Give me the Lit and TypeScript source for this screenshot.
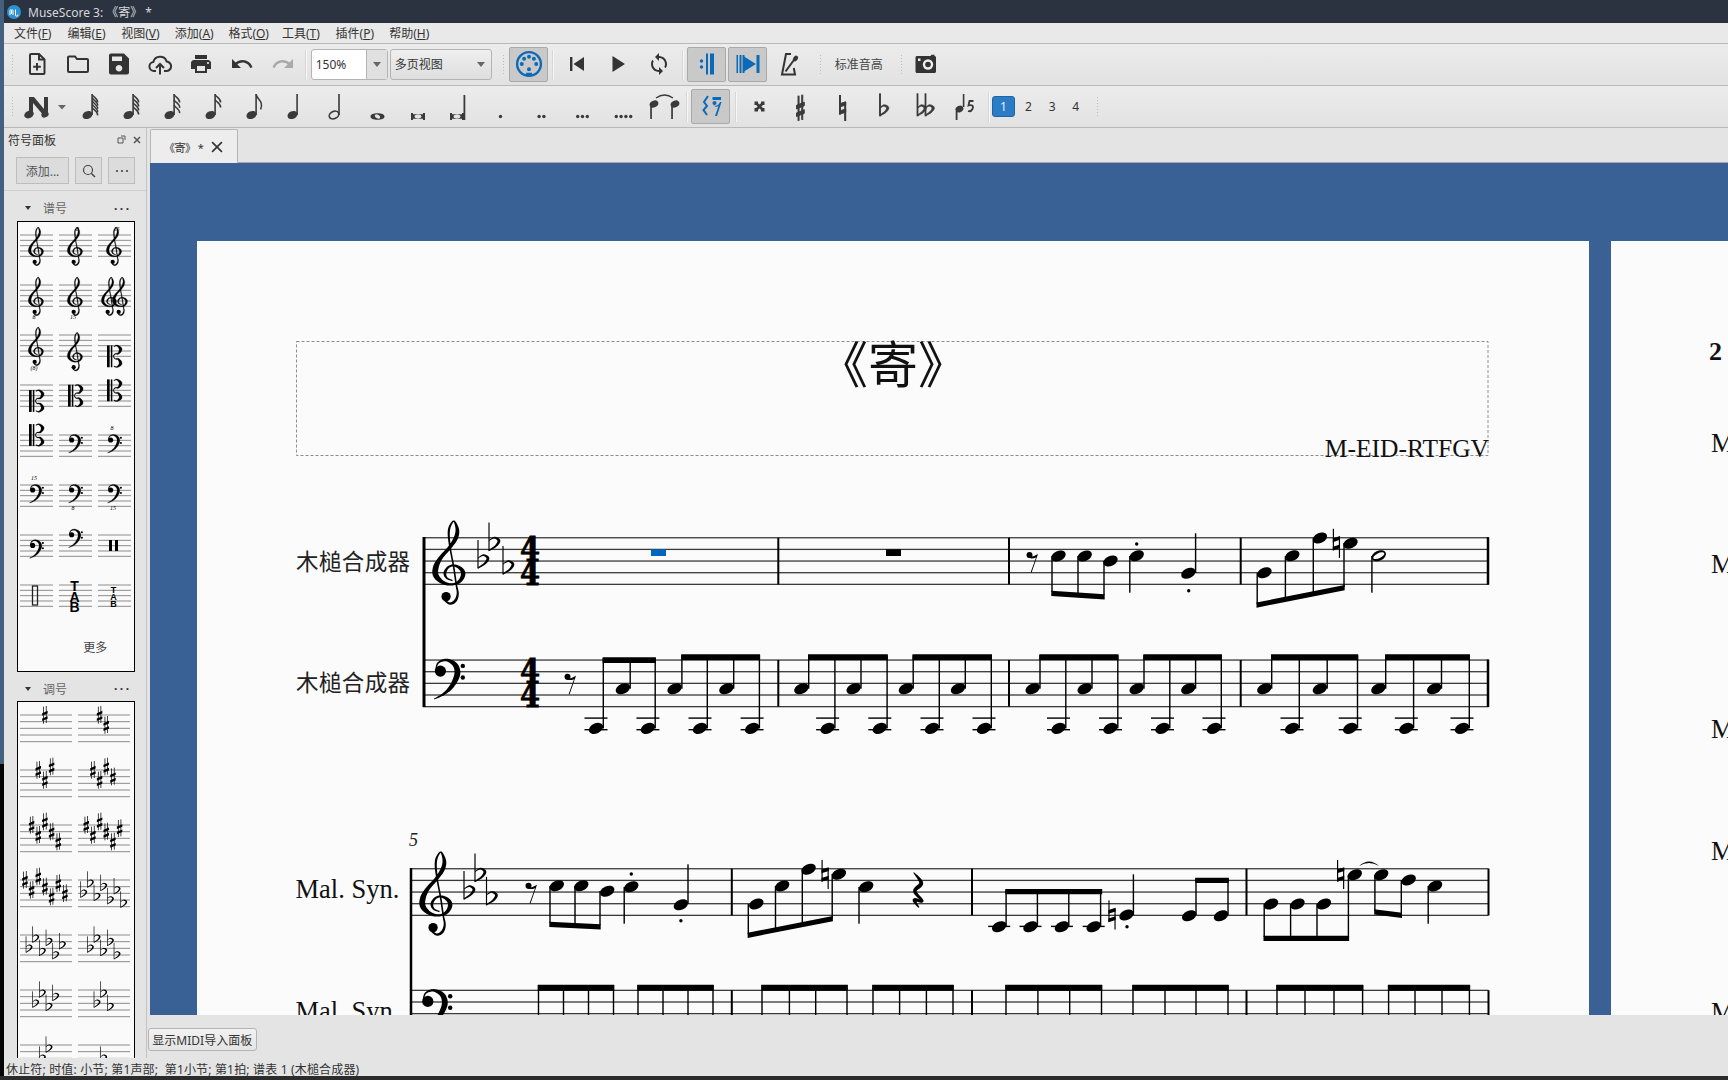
import { LitElement, html, css, svg } from 'lit'
import { customElement } from 'lit/decorators.js'

// variable width stroke: [x, y, width] control points, catmull-rom sampled, returned as a filled outline
function brush(pts: number[][]): string {
  const s: number[][] = []
  const cr = (a: number, b: number, c: number, d: number, t: number) =>
    0.5 * (2 * b + (c - a) * t + (2 * a - 5 * b + 4 * c - d) * t * t + (3 * b - a - 3 * c + d) * t * t * t)
  for (let i = 0; i < pts.length - 1; i++) {
    const p0 = pts[Math.max(i - 1, 0)], p1 = pts[i], p2 = pts[i + 1], p3 = pts[Math.min(i + 2, pts.length - 1)]
    for (let k = 0; k < 8; k++) {
      const t = k / 8
      s.push([cr(p0[0], p1[0], p2[0], p3[0], t), cr(p0[1], p1[1], p2[1], p3[1], t), cr(p0[2], p1[2], p2[2], p3[2], t)])
    }
  }
  s.push(pts[pts.length - 1])
  const l: string[] = [], r: string[] = []
  s.forEach((p, i) => {
    const a = s[Math.max(i - 1, 0)], b = s[Math.min(i + 1, s.length - 1)]
    const dx = b[0] - a[0], dy = b[1] - a[1], n = Math.hypot(dx, dy) || 1
    const ox = (-dy / n) * p[2] / 2, oy = (dx / n) * p[2] / 2
    l.push(`${(p[0] + ox).toFixed(3)} ${(p[1] + oy).toFixed(3)}`)
    r.unshift(`${(p[0] - ox).toFixed(3)} ${(p[1] - oy).toFixed(3)}`)
  })
  return `M${l.join('L')}L${r.join('L')}Z`
}

const TREBLE = brush([
  [0.3, 0.68, 0.1], [-0.2, 0.45, 0.16], [-0.35, 0, 0.24], [-0.05, -0.48, 0.18], [0.45, -0.62, 0.18],
  [1.0, -0.35, 0.3], [1.22, 0.1, 0.38], [0.95, 0.7, 0.3], [0.3, 1.0, 0.18], [-0.5, 0.85, 0.3],
  [-1.12, 0.25, 0.48], [-1.12, -0.5, 0.48], [-0.7, -1.3, 0.34], [0, -2.1, 0.3], [0.55, -2.9, 0.36],
  [0.72, -3.6, 0.32], [0.55, -4.25, 0.18], [0.35, -4.4, 0.12], [0.05, -3.9, 0.18], [-0.02, -3.2, 0.18],
  [0.12, -2, 0.14], [0.4, -0.5, 0.14], [0.62, 1, 0.14], [0.75, 1.8, 0.18], [0.55, 2.4, 0.24],
  [0.1, 2.65, 0.2], [-0.35, 2.4, 0.14],
])
const BASS = brush([
  [0.1, -0.1, 0.1], [0.3, -0.75, 0.14], [1.0, -1.0, 0.22], [1.75, -0.6, 0.42], [1.95, 0.2, 0.5],
  [1.5, 1.2, 0.38], [0.8, 1.9, 0.22], [-0.05, 2.35, 0.06],
])
const FLAT_BOWL = brush([[0, -0.25, 0.06], [0.45, -0.5, 0.14], [0.85, -0.25, 0.24], [0.6, 0.2, 0.18], [0, 0.6, 0.1]])
const C_UP = brush([[1.3, -1.85, 0.12], [1.9, -2, 0.22], [2.55, -1.35, 0.55], [2.15, -0.55, 0.3], [1.5, -0.45, 0.14], [1.2, -0.02, 0.12]])
const C_DOWN = brush([[1.3, 1.85, 0.12], [1.9, 2, 0.22], [2.55, 1.35, 0.55], [2.15, 0.55, 0.3], [1.5, 0.45, 0.14], [1.2, 0.02, 0.12]])
const QUARTER_REST = brush([[0.1, -1.5, 0.08], [0.75, -0.6, 0.34], [0.2, 0.1, 0.3], [0.85, 0.95, 0.22], [0.15, 0.85, 0.3], [0.55, 1.5, 0.1]])

const treble = (x: number, y: number, s: number) => svg`<g transform="translate(${x} ${y}) scale(${s})">
  <path d=${TREBLE}></path><circle cx="-0.25" cy="2.05" r="0.4"></circle></g>`
const bass = (x: number, y: number, s: number) => svg`<g transform="translate(${x} ${y}) scale(${s})">
  <path d=${BASS}></path><circle cx="0.5" cy="-0.05" r="0.48"></circle>
  <circle cx="2.42" cy="-0.5" r="0.19"></circle><circle cx="2.42" cy="0.5" r="0.19"></circle></g>`
const altoClef = (x: number, y: number, s: number) => svg`<g transform="translate(${x} ${y}) scale(${s})">
  <rect x="0" y="-2.05" width="0.5" height="4.1"></rect><rect x="0.72" y="-2.05" width="0.28" height="4.1"></rect>
  <path d=${C_UP}></path><path d=${C_DOWN}></path></g>`
const flat = (x: number, y: number, s: number) => svg`<g transform="translate(${x} ${y}) scale(${s})">
  <rect x="-0.05" y="-1.8" width="0.1" height="2.45"></rect><path d=${FLAT_BOWL}></path></g>`
const sharp = (x: number, y: number, s: number) => svg`<g transform="translate(${x} ${y}) scale(${s})">
  <rect x="0.16" y="-1.25" width="0.11" height="2.55"></rect><rect x="0.55" y="-1.35" width="0.11" height="2.55"></rect>
  <polygon points="0,-0.28 0.82,-0.62 0.82,-0.24 0,0.1"></polygon><polygon points="0,0.52 0.82,0.18 0.82,0.56 0,0.9"></polygon></g>`
const natural = (x: number, y: number, s: number) => svg`<g transform="translate(${x} ${y}) scale(${s})">
  <rect x="0" y="-1.25" width="0.1" height="1.85"></rect><rect x="0.52" y="-0.55" width="0.1" height="1.8"></rect>
  <polygon points="0,-0.42 0.62,-0.62 0.62,-0.3 0,-0.1"></polygon><polygon points="0,0.3 0.62,0.1 0.62,0.42 0,0.62"></polygon></g>`

const head = (x: number, y: number) =>
  svg`<ellipse cx=${x} cy=${y} rx="7.6" ry="5" transform="rotate(-25 ${x} ${y})"></ellipse>`
const stem = (x: number, y1: number, y2: number) =>
  svg`<rect x=${x - 0.7} y=${Math.min(y1, y2)} width="1.4" height=${Math.abs(y2 - y1)}></rect>`
const beam = (x1: number, y1: number, x2: number, y2: number, h = 5.2) =>
  svg`<polygon points="${x1 - 0.7},${y1} ${x2 + 0.7},${y2} ${x2 + 0.7},${y2 + h} ${x1 - 0.7},${y1 + h}"></polygon>`
const dot = (x: number, y: number) => svg`<circle cx=${x} cy=${y} r="1.7"></circle>`
const bar = (x: number, y1: number, y2: number, w = 2) =>
  svg`<rect x=${x - w / 2} y=${y1} width=${w} height=${y2 - y1}></rect>`
const staffLines = (x1: number, x2: number, top: number) =>
  [0, 1, 2, 3, 4].map(i => svg`<rect class="line" x=${x1} y=${top + i * 11.65 - 0.6} width=${x2 - x1} height="1.3"></rect>`)
const rest8 = (x: number, y: number) => svg`<circle cx=${x + 3.5} cy=${y} r="3"></circle>
  <path d="M${x + 1} ${y + 2} Q${x + 6} ${y + 3} ${x + 12} ${y - 1} L${x + 5.6} ${y + 17.5} L${x + 4.6} ${y + 17.5} L${x + 10} ${y + 2.5} Q${x + 5} ${y + 4.5} ${x + 1} ${y + 2}Z"></path>`
const timeSig = (x: number, top: number) => svg`
  <text class="timesig" x=${x} y=${top + 23.4} textLength="20" lengthAdjust="spacingAndGlyphs">4</text>
  <text class="timesig" x=${x} y=${top + 46.8} textLength="20" lengthAdjust="spacingAndGlyphs">4</text>`

// lower staff: alternating eighths (high note, low note on two ledger lines)
const pedal = (x: number, st: number, low: boolean, beamTop: number) => {
  const y = low ? 728.4 : 688.7
  return svg`${head(x, y)}${stem(st, beamTop + 1, y)}
    ${low ? svg`<rect x=${x - 11.5} y="717.4" width="23" height="1.4"></rect><rect x=${x - 11.5} y="729" width="23" height="1.4"></rect>` : ''}`
}

const LOWER: [number, boolean][][] = [
  [[596, true], [622.9, false], [647.9, true]],
  [[674.6, false], [700, true], [726.4, false], [752.1, true]],
  [[801.4, false], [827.6, true], [853.7, false], [879.8, true]],
  [[905.9, false], [932, true], [958, false], [984, true]],
  [[1032.7, false], [1058.5, true], [1084.7, false], [1110.5, true]],
  [[1136.7, false], [1162.5, true], [1188.3, false], [1214, true]],
  [[1264.4, false], [1292, true], [1319.9, false], [1350.2, true]],
  [[1378.4, false], [1406.3, true], [1434.2, false], [1462, true]],
]

const SYS2_LOWER = [
  [538.5, 563.5, 588.5, 613.5], [638, 663, 688, 713], [762, 789.4, 815.7, 847], [873, 899.6, 926.4, 953],
  [1006, 1037.9, 1069.7, 1101.5], [1133, 1165, 1196, 1228], [1277, 1305, 1334, 1362.6], [1388.6, 1415, 1442, 1469.4],
]

// palette contents
const cellLines = (x1: number, x2: number, top: number, gap: number) =>
  [0, 1, 2, 3, 4].map(i => svg`<rect class="pline" x=${x1} y=${top + i * gap - 0.5} width=${x2 - x1} height="1"></rect>`)

const mark = (x: number, y: number, t: string) => svg`<text class="mark" x=${x} y=${y}>${t}</text>`
const G = (line: number, extra: unknown = '') => svg`${treble(18, 13 + line * 5.33, 5.33)}${extra}`
const F = (line: number, extra: unknown = '') => svg`${bass(12, 13 + line * 5.33, 5.33)}${extra}`
const C = (line: number) => altoClef(11, 13 + line * 5.33, 5.33)
const CLEFS = [
  G(3), G(3, mark(20.5, 9, '8')), G(3, mark(20.5, 9, '15')),
  G(3, mark(16, 47, '8')), G(3, mark(16, 47, '15')),
  svg`${treble(13, 29, 5.33)}${treble(24, 29, 5.33)}`,
  G(3, mark(16, 48, '(8)')), G(4), C(4),
  C(3), C(2), C(1),
  C(0), F(1), F(1, mark(16, 8, '8')),
  F(1, mark(16, 8, '15')), F(1, mark(16, 38, '8')), F(1, mark(17, 38, '15')),
  F(2), F(0),
  svg`<rect x="13" y="18" width="3" height="11"></rect><rect x="19" y="18" width="3" height="11"></rect>`,
  svg`<rect class="hollow" x="14.5" y="14" width="5" height="19"></rect>`,
  svg`<text class="tab big" x="17.5" y="19">T</text><text class="tab big" x="17.5" y="29.5">A</text><text class="tab big" x="17.5" y="40">B</text>`,
  svg`<text class="tab" x="17.5" y="20.5">T</text><text class="tab" x="17.5" y="27.5">A</text><text class="tab" x="17.5" y="34.5">B</text>`,
]

const SHARP_POS = [0, 1.5, -0.5, 1, 2.5, 0.5, 2]
const FLAT_POS = [2, 0.5, 2.5, 1, 3, 1.5, 3.5]
const keySig = (n: number, isFlat: boolean) =>
  Array.from({ length: n }, (_, i) => {
    const x = 27 - 3.33 * n + 6.67 * i
    return isFlat ? flat(x + 1, 13 + FLAT_POS[i] * 6.67, 6.67) : sharp(x + 0.5, 13 + SHARP_POS[i] * 6.67, 6.67)
  })
const KEYS: [number, boolean][] = [[1, false], [2, false], [3, false], [4, false], [5, false], [6, false], [7, false], [7, true], [6, true], [5, true], [4, true], [3, true], [2, true], [1, true]]

// toolbar glyphs, drawn in a 41x43 box
const noteIcon = (flags: number, headX = 17.5) => {
  const st = headX + 4.6
  const step = flags > 2 ? 16 / flags : 5
  return html`<svg class="glyph" viewBox="0 0 41 43"><ellipse cx=${headX} cy="30" rx="5.2" ry="3.8" transform="rotate(-25 ${headX} 30)"></ellipse>
    <rect x=${st - 0.8} y="9" width="1.6" height="21"></rect>
    ${Array.from({ length: flags }, (_, i) => {
      const y = 9.5 + i * step
      return flags === 1
        ? svg`<path class="flag" d="M${st} ${y} C${st + 1} ${y + 5} ${st + 8} ${y + 7} ${st + 4.5} ${y + 15}"></path>`
        : svg`<path class="flag" d="M${st} ${y} C${st + 1.5} ${y + 3} ${st + 6} ${y + 4} ${st + 5.5} ${y + 8}"></path>`
    })}</svg>`
}
const dotsIcon = (n: number) => html`<svg class="glyph" viewBox="0 0 41 43">
  ${Array.from({ length: n }, (_, i) => svg`<circle cx=${20.5 - (n - 1) * 2.4 + i * 4.8} cy="31.5" r="1.7"></circle>`)}</svg>`
const plain = (body: unknown) => html`<svg class="glyph" viewBox="0 0 41 43">${body}</svg>`
const fat = (body: unknown) => html`<svg class="glyph fat" viewBox="0 0 41 43">${body}</svg>`
const icon24 = (body: unknown, cls = 'i24') => html`<svg class=${cls} viewBox="0 0 24 24">${body}</svg>`

const UNDO = 'M12.5 8c-2.65 0-5.05.99-6.9 2.6L2 7v9h9l-3.62-3.62c1.39-1.16 3.16-1.88 5.12-1.88 3.54 0 6.55 2.31 7.6 5.5l2.37-.78C21.08 11.03 17.15 8 12.5 8z'

const TOOLS1 = [
  icon24(svg`<path class="ln" d="M6 2h8l5.5 5.5V21a1 1 0 0 1-1 1H6a1 1 0 0 1-1-1V3a1 1 0 0 1 1-1z"></path><path class="ln" d="M14 2v5.5h5.5M12 11v7.5M8.2 14.7h7.6"></path>`),
  icon24(svg`<path class="ln" d="M2 5.5a1 1 0 0 1 1-1h6l2 2.5h10a1 1 0 0 1 1 1V19a1 1 0 0 1-1 1H3a1 1 0 0 1-1-1z"></path>`),
  icon24(svg`<path d="M17 1.5H4C2.9 1.5 2 2.4 2 3.5v17c0 1.1.9 2 2 2h16c1.1 0 2-.9 2-2v-14l-5-5zm-5 18c-1.9 0-3.3-1.4-3.3-3.3s1.4-3.3 3.3-3.3 3.3 1.4 3.3 3.3-1.4 3.3-3.3 3.3zm3-10.5H5V4.500h10V9z"></path>`),
  icon24(svg`<path class="ln" d="M8 19H6a4.500 4.500 0 0 1-.7-8.950A7 7 0 0 1 18.700 9.600 4.700 4.700 0 0 1 18 19h-2"></path><path class="ln" d="M12 22.500V12.500M8 16l4-4 4 4"></path>`),
  icon24(svg`<path d="M19 8H5c-1.660 0-3 1.340-3 3v6h4v4h12v-4h4v-6c0-1.660-1.340-3-3-3zm-3 11H8v-5h8v5zm3-7c-.55 0-1-.45-1-1s.45-1 1-1 1 .45 1 1-.45 1-1 1zm-1-9H6v4h12V3z"></path>`),
  icon24(svg`<path d=${UNDO}></path>`),
  icon24(svg`<path class="dim" transform="translate(24 0) scale(-1 1)" d=${UNDO}></path>`),
]

const MIDI = icon24(svg`<circle class="blue-ln" cx="12" cy="12" r="10.200"></circle><path class="blue" d="M9.500 19.500h5v2.500h-5z"></path>
  <circle class="blue" cx="5.800" cy="12" r="1.700"></circle><circle class="blue" cx="7.800" cy="7.500" r="1.700"></circle><circle class="blue" cx="12" cy="5.700" r="1.700"></circle>
  <circle class="blue" cx="16.200" cy="7.500" r="1.700"></circle><circle class="blue" cx="18.200" cy="12" r="1.700"></circle><circle class="blue" cx="12" cy="16.500" r="1.700"></circle>`, 'i28')

const ACCIDENTALS = [
  plain(svg`<path class="dbl" d="M17.500 18.500l6 6M23.500 18.500l-6 6"></path><rect x="15.500" y="16.500" width="3.500" height="3.500"></rect><rect x="22" y="16.500" width="3.500" height="3.500"></rect><rect x="15.500" y="23" width="3.500" height="3.500"></rect><rect x="22" y="23" width="3.500" height="3.500"></rect>`),
  fat(sharp(16.500, 23, 9.5)),
  fat(natural(18.500, 23, 10)),
  fat(flat(18, 25, 9)),
  fat(svg`${flat(14.500, 25, 9)}${flat(22.500, 25, 9)}`),
  // voice flip: note with stems either way, hook on the right
  plain(svg`<ellipse cx="15.500" cy="24" rx="4" ry="3.200" transform="rotate(-25 15.500 24)"></ellipse><rect x="11.700" y="24" width="1.800" height="11"></rect><rect x="18.800" y="9" width="1.600" height="13"></rect>
    <path class="flag2" d="M29.500 16h-4l-1 4.500c3-1 5.500 0 4 3.500-1 2-3 2.500-4.500 2"></path>`),
]

@customElement('app-root')
export class AppRoot extends LitElement {
  static styles = css`
    :host {
      display: flex;
      flex-direction: column;
      width: 1728px;
      height: 1080px;
      overflow: hidden;
      font-family: 'Noto Sans', 'Noto Sans CJK SC', sans-serif;
      font-size: 12px;
      color: #333;
      background: #e4e4e4;
    }
    .frame { flex: 1; display: flex; min-height: 0; }
    .desk { width: 4px; flex: none; background: linear-gradient(#44607f 0 71%, #060606 71%); }
    .window { flex: 1; display: flex; flex-direction: column; min-width: 0; }
    .bottom-edge { height: 4px; flex: none; background: #2c2c2c; }

    .titlebar { height: 23px; flex: none; display: flex; align-items: center; background: #2c3340; color: #d6d8dc; font-size: 12px; padding-left: 3px; gap: 7px; }
    .logo { width: 14px; height: 14px; }
    .menubar { height: 20px; flex: none; display: flex; align-items: center; padding-left: 2px; background: #e9e9e9; font-size: 12px; }
    .menubar span { padding: 0 8px; width: 37.600px; white-space: nowrap; }

    .toolbar { flex: none; display: flex; align-items: center; background: linear-gradient(#ececec, #e2e2e2); border-top: 1px solid #b9b9b9; }
    .row1 { height: 41px; }
    .row2 { height: 41px; border-bottom: 1px solid #b9b9b9; }
    .grip { width: 4px; height: 22px; flex: none; background-image: radial-gradient(#bdbdbd 0.7px, transparent 0.9px); background-size: 3px 3px; }
    .sep { width: 1px; height: 30px; flex: none; background: #f7f7f7; box-shadow: -1px 0 0 #d6d6d6; }
    .tb { width: 41px; height: 40px; flex: none; display: flex; align-items: center; justify-content: center; margin-top: -1px; }
    .on { width: 37px; height: 33px; margin: -1px 1px 0; border: 1px solid #a9a9a9; border-radius: 2px; background: #c9c9c9; }
    .voice { width: 22px; height: 21px; margin-right: 1.600px; flex: none; display: flex; align-items: center; justify-content: center; border-radius: 3px; font-size: 12px; }
    .voice.sel { width: 23px; margin-right: 2.500px; background: #2a7cc7; border: 1px solid #1e63a3; box-sizing: border-box; color: #e6f0fa; }
    .i24 { width: 24px; height: 24px; fill: #333; }
    .i28 { width: 28px; height: 28px; }
    .glyph { width: 41px; height: 43px; flex: none; fill: #3a3a3a; }
    .fat { stroke: #3a3a3a; stroke-width: 0.1; }
    .dbl { fill: none; stroke: #3a3a3a; stroke-width: 2.600; }
    .ln { fill: none; stroke: #333; stroke-width: 2; }
    .dim { fill: #a9a9a9; }
    .blue { fill: #0a6ab8; stroke: none; }
    .blue-ln { fill: none; stroke: #0a6ab8; stroke-width: 2; }
    .flag { fill: none; stroke: #3a3a3a; stroke-width: 1.500; }
    .flag2 { fill: none; stroke: #3a3a3a; stroke-width: 1.800; }
    .combo { height: 31px; flex: none; display: flex; align-items: center; box-sizing: border-box; border: 1px solid #b4b4b4; border-radius: 3px; font-size: 12px; margin-top: -1px; }
    .zoom { width: 77.500px; margin-left: 4px; background: #fff; padding-left: 4px; }
    .zoom .val { width: 50px; }
    .zoom .drop { width: 20px; height: 29px; background: #e0e0e0; border-left: 1px solid #b4b4b4; display: flex; align-items: center; justify-content: center; }
    .view { width: 102px; margin-left: 1.500px; background: linear-gradient(#efefef, #dedede); padding-left: 4px; justify-content: space-between; padding-right: 6px; }
    .arrow { width: 0; height: 0; border: 4px solid transparent; border-top: 5px solid #666; border-bottom: 0; }
    .concert { width: 48px; margin-left: 12px; font-size: 12px; white-space: nowrap; color: #444; margin-top: -1px; }
    .m1 { margin-left: 1.500px; }
    .m2 { margin-left: 2px; }
    .m3 { margin-left: 3.500px; }
    .m4 { margin-left: 4px; }
    .m5 { margin-left: 5px; }
    .m6 { margin-left: 6.700px; }
    .m8 { margin-left: 8px; }
    .m10 { margin-left: 10px; }
    .m17 { margin-left: 17px; }
    .note-input { width: 52px; height: 40px; margin-left: 3.300px; flex: none; display: flex; align-items: center; justify-content: flex-end; }
    .note-input svg { width: 52px; height: 43px; fill: #3a3a3a; }

    .content { flex: 1; display: flex; min-height: 0; }
    .dock { width: 142px; flex: none; margin-right: 3px; border-right: 1px solid #c2c2c2; overflow: hidden; background: #e4e4e4; }
    .dock-title { height: 24px; padding-left: 4px; display: flex; align-items: center; font-size: 12px; }
    .dock-title span { flex: 1; }
    .dock-title svg { width: 15px; height: 12px; stroke: #555; fill: none; }
    .dock-actions { margin-top: 5px; height: 27px; padding-left: 12px; display: flex; gap: 6px; }
    .pbtn { box-sizing: border-box; height: 27px; width: 27px; display: flex; align-items: center; justify-content: center; background: #dcdcdc; border: 1px solid #bdbdbd; color: #555; }
    .pbtn.add { width: 53px; }
    .pbtn svg { width: 16px; height: 16px; fill: none; stroke: #444; }
    .pbtn svg circle.fill { fill: #444; stroke: none; }
    .divider { margin-top: 6px; height: 1px; background: #cfcfcf; }
    .section { height: 30px; display: flex; align-items: center; padding: 4px 0 0 24px; font-size: 12px; color: #666; box-sizing: border-box; }
    .section + .pal + .section { height: 29px; }
    .section .tri { width: 0; height: 0; border: 3.500px solid transparent; border-top: 4.500px solid #333; border-bottom: 0; margin: 0 12px 0 -3px; }
    .section .name { flex: 1; }
    .section .more { width: 32px; color: #333; letter-spacing: 2.500px; font-weight: 700; }
    .pal { margin-left: 12.500px; width: 118.500px; box-sizing: border-box; border: 1px solid #000; background: #fafafa; }
    .clefs { display: grid; grid-template-columns: repeat(3, 39px); padding-left: 0.500px; }
    .clefs svg { width: 39px; height: 50px; display: block; }
    .clefs path { stroke: #000; stroke-width: 0.05; }
    .keys { display: grid; grid-template-columns: repeat(2, 58.200px); padding-left: 0.500px; }
    .keys svg { width: 58px; height: 55px; display: block; }
    .pline { fill: #8c8c8c; }
    .hollow { fill: none; stroke: #222; stroke-width: 1.300; }
    .mark { font-family: 'Liberation Serif', serif; font-style: italic; font-size: 6px; text-anchor: middle; }
    .tab { font-family: 'Liberation Sans', sans-serif; font-weight: 700; font-size: 9px; text-anchor: middle; }
    .tab.big { font-size: 14px; }
    .more-row { height: 49px; display: flex; align-items: center; justify-content: center; padding-left: 39px; font-size: 12px; color: #444; }

    .center { flex: 1; display: flex; flex-direction: column; min-width: 0; }
    .tabbar { height: 35px; flex: none; display: flex; align-items: flex-end; border-bottom: 1px solid #a9a9a9; box-sizing: border-box; }
    .tab-item { width: 88px; height: 34px; margin-bottom: -1px; box-sizing: border-box; border: 1px solid #b5b5b5; border-bottom: 0; border-radius: 2px 2px 0 0; background: #ededed; display: flex; align-items: center; padding-left: 13px; gap: 8px; font-size: 11px; letter-spacing: -0.500px; }
    .tab-item svg { width: 12px; height: 12px; stroke: #333; stroke-width: 1.500; fill: none; }
    .score { flex: 1; min-height: 0; background: #3a6195; overflow: hidden; }
    .score > svg { display: block; width: 100%; height: 100%; }
    .page { fill: #fbfbfb; }
    .line { fill: #3a3a3a; }
    .label { font-family: 'Noto Sans CJK SC', sans-serif; font-size: 22.500px; fill: #222; letter-spacing: 0.400px; }
    .latin { font-family: 'Liberation Serif', serif; font-size: 26.500px; fill: #111; }
    .title { font-family: 'Noto Sans CJK SC', sans-serif; font-size: 50px; text-anchor: middle; fill: #111; }
    .composer { font-family: 'Liberation Serif', serif; font-size: 25.500px; text-anchor: end; fill: #111; }
    .measure { font-family: 'Liberation Serif', serif; font-style: italic; font-size: 18px; fill: #222; }
    .pagenum { font-family: 'Liberation Serif', serif; font-weight: 700; font-size: 26px; fill: #111; }
    .timesig { font-family: 'DejaVu Serif', serif; font-weight: 700; font-size: 33px; stroke: #000; stroke-width: 0.800; }
    .frame-box { fill: none; stroke: #8d8d8d; stroke-width: 1; stroke-dasharray: 3 2; }
    .sel-rest { fill: #0065bf; }
    .midibar { height: 43px; flex: none; display: flex; align-items: flex-start; padding: 13px 0 0 0; box-sizing: border-box; background: #e4e4e4; }
    .midibar div { margin-left: -2px; width: 108.500px; height: 23px; box-sizing: border-box; border: 1px solid #b4b4b4; border-radius: 3px; background: linear-gradient(#f2f2f2, #e4e4e4); display: flex; align-items: center; justify-content: center; font-size: 12px; color: #333; white-space: nowrap; }
    .status { height: 18px; flex: none; padding: 4px 0 0 2px; box-sizing: border-box; display: flex; align-items: center; font-size: 12px; letter-spacing: 0.170px; white-space: pre; background: #e4e4e4; color: #333; }
  `

  private renderScore() {
    const T1 = 537.7, T2 = 660, T3 = 868.7, T4 = 990.3
    return svg`
      <rect class="page" x="197" y="241" width="1392" height="900"></rect>
      <rect class="page" x="1611" y="241" width="200" height="900"></rect>
      <rect class="frame-box" x="296.500" y="341.500" width="1191.500" height="114"></rect>
      <text class="title" x="893" y="383">《寄》</text>
      <text class="composer" x="1489" y="457">M-EID-RTFGV</text>

      <text class="label" x="296" y="570">木槌合成器</text>
      <text class="label" x="296" y="691">木槌合成器</text>
      ${staffLines(423, 1488.600, T1)}
      ${staffLines(423, 1488.600, T2)}
      ${bar(424, 537, 707, 3)}
      ${[778.300, 1009, 1240.700].map(x => svg`${bar(x, T1, T1 + 46.600)}${bar(x, T2, T2 + 46.600)}`)}
      ${bar(1488, T1 - 0.500, T1 + 47, 2.500)}${bar(1488, T2 - 0.500, T2 + 47, 2.500)}
      ${treble(449, 572.700, 11.650)}
      ${flat(478, 561, 11.650)}${flat(489, 543.500, 11.650)}${flat(503, 567, 11.650)}
      ${timeSig(520, T1)}
      ${bass(434.600, 671.700, 11.650)}
      ${timeSig(520, T2)}
      <rect class="sel-rest" x="651" y="549.300" width="15" height="6.700"></rect>
      <rect x="886" y="549.300" width="15" height="6.700"></rect>

      ${rest8(1026, 555)}
      ${head(1058.500, 556)}${head(1084.700, 556)}${head(1110.500, 561)}
      ${stem(1052, 556, 592)}${stem(1078, 556, 593)}${stem(1104, 561, 595)}
      ${beam(1052, 590.700, 1104, 594.300)}
      ${head(1136.700, 555.700)}${stem(1129.800, 556, 592.700)}${dot(1136.700, 544)}
      ${head(1188.300, 573.300)}${stem(1195.600, 533.300, 573)}${dot(1188.700, 590.700)}
      ${head(1264.400, 572.700)}${head(1292.300, 555.700)}${head(1319.900, 538)}${head(1350.500, 543.300)}
      ${stem(1257.200, 573, 604)}${stem(1285.400, 556, 598)}${stem(1313.300, 538, 592)}${stem(1344, 543, 587)}
      ${beam(1257.200, 602.500, 1344, 585)}
      ${natural(1332.800, 543.300, 11.650)}
      <g transform="rotate(-25 1378.800 555.700)"><ellipse cx="1378.800" cy="555.700" rx="7.600" ry="5"></ellipse><ellipse class="page" cx="1378.800" cy="555.700" rx="6" ry="2.500"></ellipse></g>
      ${stem(1371.900, 556, 592.700)}

      ${rest8(564, 676.700)}
      ${LOWER.map((g, gi) => {
        const top = gi === 0 ? 657.300 : 654.300
        return svg`${beam(g[0][0] + 7.300, top, g[g.length - 1][0] + 7.300, top, 5.600)}
          ${g.map(([x, low]) => pedal(x, x + 7.300, low, top))}`
      })}

      <text class="measure" x="409" y="846">5</text>
      <text class="latin" x="295.500" y="898">Mal. Syn.</text>
      <text class="latin" x="295.500" y="1020">Mal. Syn.</text>
      ${staffLines(410, 1488.600, T3)}
      ${staffLines(410, 1488.600, T4)}
      ${bar(411, 868, 1020, 2.500)}
      ${[731.800, 972, 1246.500].map(x => svg`${bar(x, T3, T3 + 46.600)}${bar(x, T4, 1020)}`)}
      ${bar(1488.500, T3, T3 + 46.600)}${bar(1488.500, T4, 1020)}
      ${treble(436, 903.700, 11.650)}
      ${flat(464, 892, 11.650)}${flat(475, 874.500, 11.650)}${flat(486.500, 897.800, 11.650)}
      ${bass(422, 1002, 11.650)}

      ${rest8(525, 885.700)}
      ${head(556.800, 885.700)}${head(581.300, 885.700)}${head(607.200, 891.300)}
      ${stem(550, 886, 923)}${stem(575, 886, 924)}${stem(600, 891, 925)}
      ${beam(550, 921.700, 600, 924.300)}
      ${head(631.300, 886.700)}${stem(624.200, 887, 923.700)}${dot(631.300, 874)}
      ${head(680.900, 904.700)}${stem(688, 864.300, 904)}${dot(680.900, 920.700)}

      ${head(756.300, 904)}${head(782.200, 886)}${head(808.600, 869.300)}${head(838.900, 874.300)}
      ${stem(748.300, 904, 934)}${stem(775.500, 886, 928)}${stem(802.300, 869, 923)}${stem(832.200, 874, 918)}
      ${beam(748.300, 932.700, 832.200, 916)}
      ${natural(821.500, 874.500, 11.650)}
      ${head(866.200, 886.700)}${stem(859, 887, 923.700)}
      <g transform="translate(912.500 890) scale(11.650)"><path d=${QUARTER_REST}></path></g>

      ${[999.200, 1030.500, 1061.900, 1093.700].map(x => svg`${head(x, 926.700)}<rect x=${x - 11} y="925.700" width="22" height="1.400"></rect>${stem(x + 6.900, 890, 926)}`)}
      ${beam(1006, 889, 1101.500, 889)}
      ${natural(1108.400, 915, 11.650)}
      ${head(1126.500, 915)}${stem(1133.400, 874.300, 915)}${dot(1127, 926.700)}
      ${head(1189.200, 915.700)}${head(1221, 915.700)}${stem(1196, 878, 915)}${stem(1228, 878, 915)}
      ${beam(1196, 877.700, 1228, 877.700)}

      ${head(1271, 904)}${head(1297.500, 904)}${head(1323.900, 904)}${head(1354.800, 874.700)}
      ${stem(1264.200, 904, 937)}${stem(1290.600, 904, 937)}${stem(1317, 904, 937)}${stem(1348.400, 875, 937)}
      ${beam(1264.200, 935.700, 1348.400, 935.700)}
      ${natural(1337, 874.500, 11.650)}
      <path d="M1359 866 Q1369 857 1379 866 Q1369 860 1359 866Z"></path>
      ${head(1381.200, 874.700)}${head(1408.700, 880)}${stem(1374.900, 875, 911)}${stem(1401.300, 880, 914)}
      ${beam(1374.900, 909.300, 1401.300, 912.700)}
      ${head(1435.100, 886)}${stem(1428.200, 886, 923.700)}

      ${SYS2_LOWER.map(g => svg`${beam(g[0], 984.700, g[3], 984.700, 6)}${g.map(x => stem(x, 985, 1020))}`)}

      <text class="pagenum" x="1709" y="360">2</text>
      ${[452, 573, 738, 860, 1021].map(y => svg`<text class="latin" x="1711" y=${y}>M</text>`)}
    `
  }

  render() {
    return html`
      <div class="frame">
        <div class="desk"></div>
        <div class="window">
          <div class="titlebar">
            <svg class="logo" viewBox="0 0 14 14"><circle cx="7" cy="7" r="7" fill="#2b93cf"></circle><path d="M3 10V5.500c0-1 1.500-1 1.500 0V9M4.500 5.500c0-1 1.500-1 1.500 0V10M8.500 10V4.500M11 9.500a1.300 1.300 0 1 1-2.500 0" fill="none" stroke="#fff" stroke-width="1"></path></svg>
            <span>MuseScore 3: 《寄》 *</span>
          </div>
          <div class="menubar">
            <span>文件(<u>F</u>)</span><span>编辑(<u>E</u>)</span><span>视图(<u>V</u>)</span><span>添加(<u>A</u>)</span>
            <span>格式(<u>O</u>)</span><span>工具(<u>T</u>)</span><span>插件(<u>P</u>)</span><span>帮助(<u>H</u>)</span>
          </div>

          <div class="toolbar row1">
            <div class="grip m6"></div>
            <div class="m2"></div>
            ${TOOLS1.map(i => html`<div class="tb">${i}</div>`)}
            <div class="sep m2"></div>
            <div class="combo zoom"><span class="val">150%</span><span class="drop"><i class="arrow"></i></span></div>
            <div class="combo view"><span>多页视图</span><i class="arrow"></i></div>
            <div class="grip m10"></div>
            <div class="tb on m3">${MIDI}</div>
            <div class="sep m4"></div>
            <div class="tb m2">${icon24(svg`<rect x="5" y="5" width="2.400" height="14"></rect><polygon points="19,5 19,19 8.500,12"></polygon>`)}</div>
            <div class="tb">${icon24(svg`<polygon points="6.500,4 6.500,20 19,12"></polygon>`)}</div>
            <div class="tb">${icon24(svg`<path d="M12 4V1L8 5l4 4V6c3.310 0 6 2.690 6 6 0 1.010-.25 1.970-.7 2.800l1.460 1.460C19.540 15.030 20 13.570 20 12c0-4.420-3.580-8-8-8zm0 14c-3.310 0-6-2.690-6-6 0-1.010.25-1.970.7-2.800L5.240 7.740C4.460 8.970 4 10.430 4 12c0 4.420 3.580 8 8 8v3l4-4-4-4v3z"></path>`)}</div>
            <div class="sep m3"></div>
            <div class="tb on m3">${icon24(svg`<circle class="blue" cx="6.500" cy="9" r="1.700"></circle><circle class="blue" cx="6.500" cy="15" r="1.700"></circle><rect class="blue" x="11" y="1.500" width="2" height="21"></rect><rect class="blue" x="15" y="1.500" width="4" height="21"></rect>`)}</div>
            <div class="tb on">${icon24(svg`<rect class="blue" x="0.500" y="3" width="1.500" height="18"></rect><rect class="blue" x="3.500" y="3" width="2" height="18"></rect><rect class="blue" x="6.500" y="3" width="2" height="18"></rect><polygon class="blue" points="8,4.500 20,12 8,19.500"></polygon><rect class="blue" x="20.500" y="3" width="3" height="18"></rect>`)}</div>
            <div class="tb m1">${icon24(svg`<path class="ln" d="M13 2H8L4 22.500H17L15.800 16"></path><path class="ln" d="M7.500 19.500L17 6.500"></path><ellipse cx="17.500" cy="6.500" rx="2.200" ry="3" transform="rotate(35 17.500 6.500)"></ellipse>`)}</div>
            <div class="grip m8"></div>
            <div class="concert">标准音高</div>
            <div class="grip m17"></div>
            <div class="tb m2">${icon24(svg`<path d="M3 4h13.500l1-1.200h3V4c1 0 1.500.8 1.500 1.500v14c0 .8-.7 1.500-1.500 1.500H3c-.8 0-1.500-.7-1.500-1.500v-14C1.500 4.700 2.200 4 3 4z"></path><circle cx="14" cy="12.500" r="5.200" fill="#eee"></circle><circle cx="14" cy="12.500" r="2.800"></circle><rect x="4" y="6.500" width="2.500" height="2.500" fill="#eee"></rect>`)}</div>
          </div>

          <div class="toolbar row2">
            <div class="grip m6"></div>
            <div class="note-input">
              <svg viewBox="0 0 52 43"><polygon points="11,12 16,12 26,24 26,12 30,12 30,31 26,31 15,18 15,29 11,29"></polygon><ellipse cx="11" cy="29.500" rx="5" ry="3.600" transform="rotate(-25 11 29.500)"></ellipse><ellipse cx="27" cy="29.500" rx="3.800" ry="2.800" transform="rotate(-25 27 29.500)"></ellipse><polygon points="40,20 48,20 44,24.500" fill="#666"></polygon></svg>
            </div>
            ${[noteIcon(5), noteIcon(4), noteIcon(3), noteIcon(2), noteIcon(1)].map(i => html`<div class="tb">${i}</div>`)}
            <div class="tb">${noteIcon(0)}</div>
            <div class="tb">${plain(svg`<ellipse cx="18" cy="30" rx="5" ry="3.600" fill="none" stroke="#3a3a3a" stroke-width="1.600" transform="rotate(-25 18 30)"></ellipse><rect x="22.200" y="9" width="1.600" height="21"></rect>`)}</div>
            <div class="tb">${plain(svg`<path fill-rule="evenodd" d="M13.500 31.500c0-2.200 3-3.300 7-3.300s7 1.100 7 3.300-3 3.300-7 3.300-7-1.100-7-3.300zm4.500-1.500c.5-1 2-1 3.500 0s2 2 1.500 3-2 1-3.500 0-2-2-1.500-3z"></path>`)}</div>
            <div class="tb">${plain(svg`<path fill-rule="evenodd" d="M13 28h2v1.200h10V28h2v7h-2v-1.200H15V35h-2zm7 1.500c-2 0-3.500.8-3.500 2s1.500 2 3.500 2 3.500-.8 3.500-2-1.500-2-3.500-2z"></path>`)}</div>
            <div class="tb">${plain(svg`<path fill-rule="evenodd" d="M11 28h2v1.200h10V28h2v7h-2v-1.200H13V35h-2zm7 1.500c-2 0-3.500.8-3.500 2s1.500 2 3.500 2 3.500-.8 3.500-2-1.500-2-3.500-2z"></path><rect x="24.500" y="10" width="1.800" height="25"></rect>`)}</div>
            ${[1, 2, 3, 4].map(n => html`<div class="tb">${dotsIcon(n)}</div>`)}
            <div class="tb">${plain(svg`<ellipse cx="10" cy="19" rx="4.500" ry="3.400" transform="rotate(-25 10 19)"></ellipse><rect x="6.200" y="19" width="1.700" height="15"></rect><ellipse cx="31" cy="19" rx="4.500" ry="3.400" transform="rotate(-25 31 19)"></ellipse><rect x="27.200" y="19" width="1.700" height="15"></rect><path class="flag" d="M12 13Q20.500 7 29 13"></path>`)}</div>
            <div class="sep m2"></div>
            <div class="tb on m3">${icon24(svg`<path class="blue-ln" d="M9 2L5 8l3 4-3.500 4 3.500 5"></path><rect class="blue" x="13.500" y="3" width="8.500" height="3"></rect><circle class="blue" cx="15.500" cy="9" r="2"></circle><path class="blue" d="M15 11.500c3 .6 5-.8 6-3.500h1.500L18 22h-2l3.500-10c-1 .9-3 1.200-4.500-.5z"></path>`)}</div>
            <div class="sep m5"></div>
            <div class="m2"></div>
            ${ACCIDENTALS.map(i => html`<div class="tb">${i}</div>`)}
            <div class="sep m3"></div>
            <div class="voice sel m2">1</div><div class="voice">2</div><div class="voice">3</div><div class="voice">4</div>
            <div class="grip m8"></div>
          </div>

          <div class="content">
            <div class="dock">
              <div class="dock-title"><span>符号面板</span>
                <svg viewBox="0 0 15 12"><path d="M2 4h5v5H2zM5 2h4v4"></path></svg>
                <svg viewBox="0 0 15 12"><path d="M3 3l6 6M9 3l-6 6" stroke-width="1.500"></path></svg>
              </div>
              <div class="dock-actions">
                <div class="pbtn add">添加...</div>
                <div class="pbtn"><svg viewBox="0 0 16 16"><circle cx="7" cy="7" r="4.500" stroke-width="1.200"></circle><path d="M10.500 10.500L14 14" stroke-width="1.500"></path></svg></div>
                <div class="pbtn"><svg viewBox="0 0 16 16"><circle class="fill" cx="3" cy="8" r="1.100"></circle><circle class="fill" cx="8" cy="8" r="1.100"></circle><circle class="fill" cx="13" cy="8" r="1.100"></circle></svg></div>
              </div>
              <div class="divider"></div>
              <div class="section"><i class="tri"></i><span class="name">谱号</span><span class="more">···</span></div>
              <div class="pal">
                <div class="clefs">
                  ${CLEFS.map(c => html`<svg viewBox="0 0 39 50">${cellLines(2, 35, 13, 5.330)}${c}</svg>`)}
                </div>
                <div class="more-row">更多</div>
              </div>
              <div class="section"><i class="tri"></i><span class="name">调号</span><span class="more">···</span></div>
              <div class="pal">
                <div class="keys">
                  ${KEYS.map(([n, f]) => html`<svg viewBox="0 0 58 55">${cellLines(2, 54, 13, 6.670)}${keySig(n, f)}</svg>`)}
                </div>
              </div>
            </div>

            <div class="center">
              <div class="tabbar">
                <div class="tab-item"><span>《寄》 *</span><svg viewBox="0 0 11 11"><path d="M1 1l9 9M10 1l-9 9"></path></svg></div>
              </div>
              <div class="score"><svg viewBox="150 163 1578 852">${this.renderScore()}</svg></div>
              <div class="midibar"><div>显示MIDI导入面板</div></div>
            </div>
          </div>

          <div class="status">休止符; 时值: 小节; 第1声部;  第1小节; 第1拍; 谱表 1 (木槌合成器)</div>
        </div>
      </div>
      <div class="bottom-edge"></div>
    `
  }
}
